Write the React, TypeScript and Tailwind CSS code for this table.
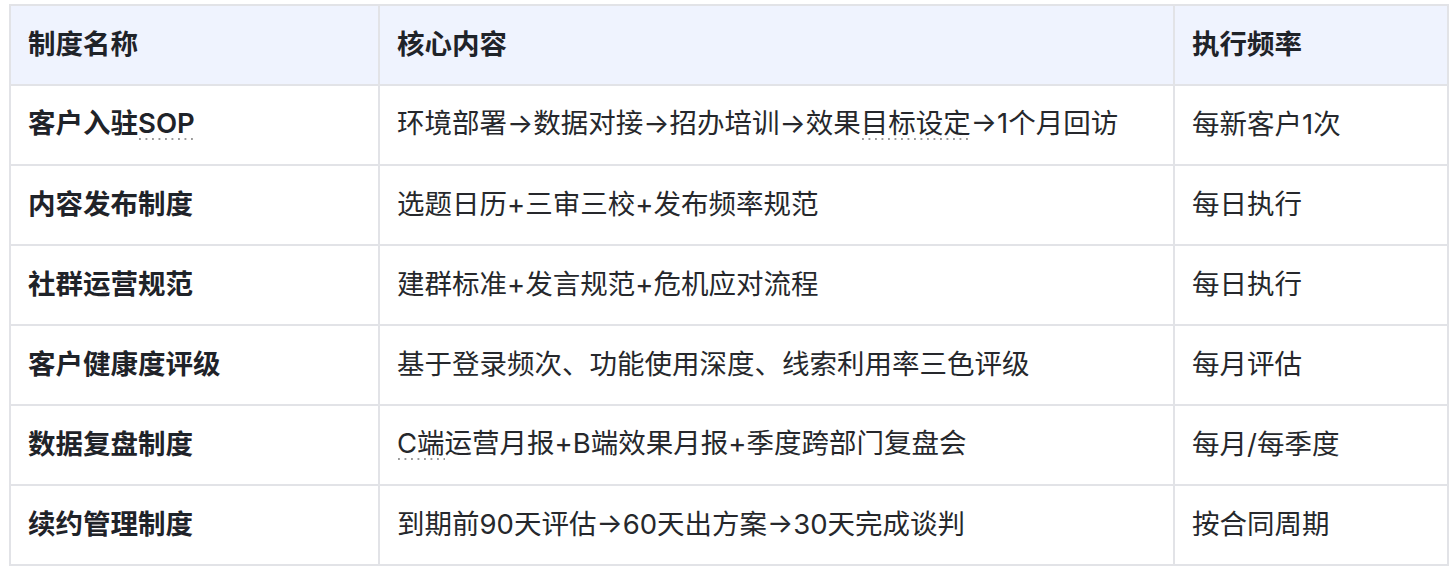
import React from 'react';

type Row = {
  name: React.ReactNode;
  content: React.ReactNode;
  freq: string;
};

// dotted hint underline, as in the screenshot
const Hint = ({ children }: { children: React.ReactNode }) => (
  <span className="inline-block pb-[3px] bg-[linear-gradient(to_right,#9b9b9b_2px,transparent_2px)] bg-[length:6.5px_2px] bg-repeat-x bg-[position:1px_100%]">
    {children}
  </span>
);

const rows: Row[] = [
  {
    name: <>客户入驻<Hint>SOP</Hint></>,
    content: <>环境部署→数据对接→招办培训→效果<Hint>目标设定</Hint>→1个月回访</>,
    freq: '每新客户1次',
  },
  { name: '内容发布制度', content: '选题日历+三审三校+发布频率规范', freq: '每日执行' },
  { name: '社群运营规范', content: '建群标准+发言规范+危机应对流程', freq: '每日执行' },
  { name: '客户健康度评级', content: '基于登录频次、功能使用深度、线索利用率三色评级', freq: '每月评估' },
  {
    name: '数据复盘制度',
    content: <><Hint>C端</Hint>运营月报+B端效果月报+季度跨部门复盘会</>,
    freq: '每月/每季度',
  },
  { name: '续约管理制度', content: '到期前90天评估→60天出方案→30天完成谈判', freq: '按合同周期' },
];

const cell = 'border-2 border-[#e2e3e7] px-[17px] h-[80px] align-middle text-left';

export default function App() {
  return (
    <div
      className="bg-white w-[1456px] h-[570px] pt-[4px] pl-[9px]"
      style={{ fontFamily: 'Inter, "Noto Sans CJK SC", sans-serif' }}
    >
      <table className="border-collapse w-[1438px] table-fixed text-[27.5px] leading-none">
        <colgroup>
          <col className="w-[369px]" />
          <col className="w-[795px]" />
          <col className="w-[274px]" />
        </colgroup>
        <thead>
          <tr className="bg-[#eff3fe]">
            <th className={`${cell} font-semibold text-[#1f2329]`}>制度名称</th>
            <th className={`${cell} font-semibold text-[#1f2329]`}>核心内容</th>
            <th className={`${cell} font-semibold text-[#1f2329]`}>执行频率</th>
          </tr>
        </thead>
        <tbody>
          {rows.map((r, i) => (
            <tr key={i}>
              <td className={`${cell} font-semibold text-[#1f2329]`}>{r.name}</td>
              <td className={`${cell} text-[#26282c]`}>{r.content}</td>
              <td className={`${cell} text-[#26282c]`}>{r.freq}</td>
            </tr>
          ))}
        </tbody>
      </table>
    </div>
  );
}
